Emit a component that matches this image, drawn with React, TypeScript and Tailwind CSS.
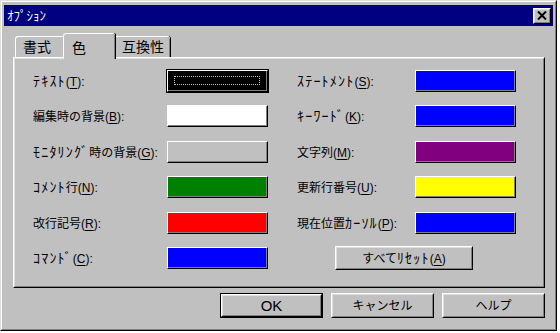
import React from "react";

const FONT = "font-['Liberation_Sans','Noto_Sans_CJK_JP',sans-serif]";

interface ColorItem {
  label: string;
  key: string;
  color: string;
}

const leftItems: ColorItem[] = [
  { label: "ﾃｷｽﾄ", key: "T", color: "#000000" },
  { label: "編集時の背景", key: "B", color: "#ffffff" },
  { label: "ﾓﾆﾀﾘﾝｸﾞ時の背景", key: "G", color: "#c0c0c0" },
  { label: "ｺﾒﾝﾄ行", key: "N", color: "#008000" },
  { label: "改行記号", key: "R", color: "#ff0000" },
  { label: "ｺﾏﾝﾄﾞ", key: "C", color: "#0000ff" },
];

const rightItems: ColorItem[] = [
  { label: "ｽﾃｰﾄﾒﾝﾄ", key: "S", color: "#0000ff" },
  { label: "ｷｰﾜｰﾄﾞ", key: "K", color: "#0000ff" },
  { label: "文字列", key: "M", color: "#800080" },
  { label: "更新行番号", key: "U", color: "#ffff00" },
  { label: "現在位置ｶｰｿﾙ", key: "P", color: "#0000ff" },
];

// half-width kana are drawn wider in the old system font
function Kana({ text }: { text: string }) {
  const parts = text.split(/([\uFF61-\uFF9F]+)/);
  return (
    <>
      {parts.map((p, i) =>
        /[\uFF61-\uFF9F]/.test(p) ? (
          <span key={i} className="text-[14px] tracking-[1.2px]">{p}</span>
        ) : (
          <span key={i}>{p}</span>
        )
      )}
    </>
  );
}

// classic raised 3d frame
function Raised({ className = "", children }: { className?: string; children?: React.ReactNode }) {
  return (
    <div className={`border border-t-white border-l-white border-r-black border-b-black ${className}`}>
      <div className="w-full h-full border border-t-[#dfdfdf] border-l-[#dfdfdf] border-r-[#808080] border-b-[#808080] flex items-center justify-center">
        {children}
      </div>
    </div>
  );
}

function Label({ item }: { item: ColorItem }) {
  return (
    <span className="text-[12px] leading-none text-black whitespace-nowrap">
      <Kana text={item.label} />(<span className="underline underline-offset-2">{item.key}</span>):
    </span>
  );
}

function Swatch({ color, focused }: { color: string; focused?: boolean }) {
  return (
    <div className={`w-[101px] h-[22px] border border-t-white border-l-white border-r-black border-b-black ${focused ? "outline outline-black" : ""}`}>
      <div className="relative w-full h-full border-r border-b border-[#808080]" style={{ backgroundColor: color }}>
        {focused && <div className="absolute inset-x-[6px] inset-y-[5px] border border-dotted border-[#c0c0c0]" />}
      </div>
    </div>
  );
}

function Row({ item, labelWidth, focused }: { item: ColorItem; labelWidth: string; focused?: boolean }) {
  return (
    <div className="flex items-center h-[22px]">
      <div className={labelWidth}>
        <Label item={item} />
      </div>
      <Swatch color={item.color} focused={focused} />
    </div>
  );
}

export default function App() {
  return (
    <div className={`w-[560px] h-[333px] bg-white ${FONT}`}>
      <div className="w-[557px] h-[331px] border border-t-[#dfdfdf] border-l-[#dfdfdf] border-r-black border-b-black">
        <div className="w-full h-full bg-[#c0c0c0] border border-t-white border-l-white border-r-[#808080] border-b-[#808080] pt-[3px] px-[2px]">
          {/* title bar */}
          <div className="h-[21px] bg-[#000080] flex items-center justify-between pl-[3px] pr-[2px]">
            <span className="text-white text-[13px] leading-none">ｵﾌﾟｼｮﾝ</span>
            <Raised className="w-[18px] h-[16px] bg-[#c0c0c0]">
              <svg width="10" height="9" viewBox="0 0 10 9">
                <path d="M1 0.5 L9 8.5 M9 0.5 L1 8.5" stroke="black" strokeWidth="2" />
              </svg>
            </Raised>
          </div>

          {/* tabs */}
          <div className="flex items-end h-[24px] mt-[7px] ml-[11px]">
            <div className="w-[48px] h-[21px] border-l border-t border-white rounded-tl-[3px] flex items-center pl-[7px] text-[14px]">
              書式
            </div>
            <div className="relative z-10 w-[52px] h-[26px] -mb-[2px] bg-[#c0c0c0] border-l border-t border-white rounded-tl-[3px] rounded-tr-[2px] shadow-[inset_-1px_0_0_#808080,1px_0_0_#000] flex items-start pt-[4px] pl-[8px] text-[14px]">
              色
            </div>
            <div className="w-[55px] h-[21px] border-t border-white rounded-tr-[3px] shadow-[inset_-1px_0_0_#808080,1px_0_0_#000] flex items-center pl-[7px] text-[14px]">
              互換性
            </div>
          </div>

          {/* panel */}
          <div className="ml-[9px] w-[532px] h-[231px] border border-t-white border-l-white border-r-black border-b-black">
            <div className="w-full h-full border border-t-[#dfdfdf] border-l-[#dfdfdf] border-r-[#808080] border-b-[#808080] flex pl-[18px] pt-[11px]">
              <div className="w-[264px] flex flex-col gap-[13.4px]">
                {leftItems.map((it, i) => (
                  <Row key={it.key} item={it} labelWidth="w-[134px]" focused={i === 0} />
                ))}
              </div>
              <div className="flex flex-col gap-[13.4px]">
                {rightItems.map((it) => (
                  <Row key={it.key} item={it} labelWidth="w-[118px]" />
                ))}
                <div className="flex items-center h-[22px]">
                  <Raised className="ml-[38px] w-[138px] h-[24px]">
                    <span className="text-[12px] leading-none">
                      <Kana text="すべてﾘｾｯﾄ" />(<span className="underline underline-offset-2">A</span>)
                    </span>
                  </Raised>
                </div>
              </div>
            </div>
          </div>

          {/* dialog buttons */}
          <div className="ml-[9px] w-[532px] mt-[5px] flex justify-end gap-[8px]">
            <div className="border border-black">
              <Raised className="w-[101px] h-[23px]">
                <span className="text-[15px] leading-none">OK</span>
              </Raised>
            </div>
            <Raised className="w-[103px] h-[25px]">
              <span className="text-[12px] leading-none">キャンセル</span>
            </Raised>
            <Raised className="w-[103px] h-[25px]">
              <span className="text-[12px] leading-none">ヘルプ</span>
            </Raised>
          </div>
        </div>
      </div>
    </div>
  );
}
